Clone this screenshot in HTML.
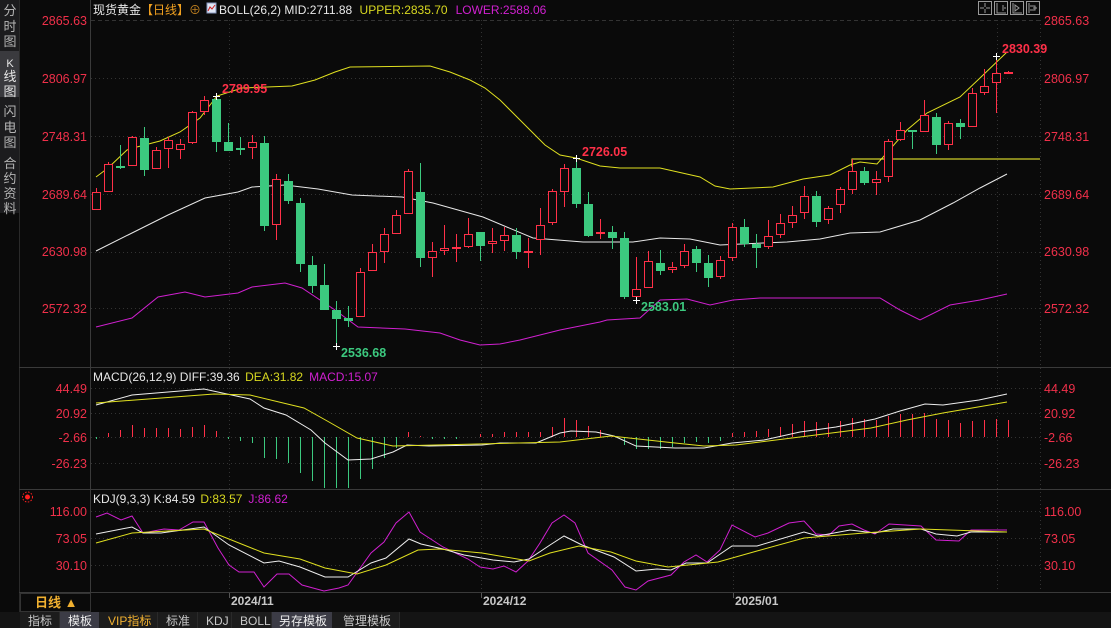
<!DOCTYPE html>
<html><head><meta charset="utf-8"><style>
html,body{margin:0;padding:0;background:#0a0a0a;overflow:hidden}
body{width:1111px;height:628px;position:relative;font-family:"Liberation Sans","Noto Sans CJK SC",sans-serif}
svg{position:absolute;left:0;top:0}
text{font-family:"Liberation Sans","Noto Sans CJK SC",sans-serif}
</style></head><body>
<svg id="s" width="1111" height="628" viewBox="0 0 1111 628" xmlns="http://www.w3.org/2000/svg">
<rect width="1111" height="628" fill="#0a0a0a"/>
<!-- sidebar -->
<rect x="0" y="0" width="19" height="213" fill="#1c1c1e"/>
<rect x="0" y="51" width="19" height="46" fill="#3a3a3e"/>
<g fill="#b4b4b4" font-size="13" text-anchor="middle">
<text x="10" y="15">分</text><text x="10" y="31">时</text><text x="10" y="46">图</text>
<text x="10" y="67" fill="#e6e6e6" font-size="11">K</text><text x="10" y="81" fill="#e6e6e6">线</text><text x="10" y="96" fill="#e6e6e6">图</text>
<text x="10" y="116">闪</text><text x="10" y="132">电</text><text x="10" y="147">图</text>
<text x="10" y="168">合</text><text x="10" y="183">约</text><text x="10" y="198">资</text><text x="10" y="213">料</text>
</g>
<line x1="19.5" y1="0" x2="19.5" y2="612" stroke="#2a2a2a"/>
<!-- frame lines -->
<g stroke="#3a3a3a" stroke-width="1">
<line x1="90.5" y1="0" x2="90.5" y2="612"/>
<line x1="19" y1="367.5" x2="1111" y2="367.5"/>
<line x1="19" y1="489.5" x2="1111" y2="489.5"/>
<line x1="19" y1="592.5" x2="1111" y2="592.5"/>
</g>
<!-- grid -->
<g stroke="#333" stroke-dasharray="1,3">
<line x1="91" y1="20.5" x2="1040" y2="20.5" stroke-dasharray="4,3"/>
<line x1="91" y1="78.5" x2="1040" y2="78.5"/>
<line x1="91" y1="136.5" x2="1040" y2="136.5"/>
<line x1="91" y1="194.5" x2="1040" y2="194.5"/>
<line x1="91" y1="252.5" x2="1040" y2="252.5"/>
<line x1="91" y1="308.5" x2="1040" y2="308.5"/>
<line x1="91" y1="388.5" x2="1040" y2="388.5"/>
<line x1="91" y1="413.5" x2="1040" y2="413.5"/>
<line x1="91" y1="437.5" x2="1040" y2="437.5"/>
<line x1="91" y1="463.5" x2="1040" y2="463.5"/>
<line x1="91" y1="511.5" x2="1040" y2="511.5"/>
<line x1="91" y1="538.5" x2="1040" y2="538.5"/>
<line x1="91" y1="565.5" x2="1040" y2="565.5"/>
<line x1="229.5" y1="20" x2="229.5" y2="592"/>
<line x1="481.5" y1="20" x2="481.5" y2="592"/>
<line x1="733.5" y1="20" x2="733.5" y2="592"/>
<line x1="997.5" y1="20" x2="997.5" y2="592"/>
<line x1="1040.5" y1="20" x2="1040.5" y2="592"/>
</g>
<!-- axis labels -->
<g fill="#f0304a" font-size="12.5" text-anchor="end">
<text x="87" y="25">2865.63</text><text x="87" y="83">2806.97</text><text x="87" y="141">2748.31</text><text x="87" y="199">2689.64</text><text x="87" y="256">2630.98</text><text x="87" y="313">2572.32</text>
<text x="87" y="393">44.49</text><text x="87" y="418">20.92</text><text x="87" y="442">-2.66</text><text x="87" y="468">-26.23</text>
<text x="87" y="516">116.00</text><text x="87" y="543">73.05</text><text x="87" y="570">30.10</text>
</g>
<g fill="#f0304a" font-size="12.5">
<text x="1044" y="25">2865.63</text><text x="1044" y="83">2806.97</text><text x="1044" y="141">2748.31</text><text x="1044" y="199">2689.64</text><text x="1044" y="256">2630.98</text><text x="1044" y="313">2572.32</text>
<text x="1044" y="393">44.49</text><text x="1044" y="418">20.92</text><text x="1044" y="442">-2.66</text><text x="1044" y="468">-26.23</text>
<text x="1044" y="516">116.00</text><text x="1044" y="543">73.05</text><text x="1044" y="570">30.10</text>
</g>
<!-- headers -->
<text x="93" y="14" font-size="12" fill="#e8e8e8">现货黄金<tspan fill="#f0a020">【日线】</tspan><tspan fill="#c08020">⊕</tspan></text>
<rect x="207" y="3" width="9" height="10" fill="#dfe6f5" stroke="#8898c0"/>
<polyline points="208,11 210,7 212,9 215,5" fill="none" stroke="#d02020" stroke-width="1"/>
<text x="219" y="14" font-size="12" fill="#e8e8e8">BOLL(26,2) MID:2711.88 <tspan fill="#d8d820" dx="4">UPPER:2835.70</tspan><tspan fill="#d020d0" dx="8">LOWER:2588.06</tspan></text>
<text x="93" y="381" font-size="12" fill="#e8e8e8">MACD(26,12,9) DIFF:39.36 <tspan fill="#d8d820" dx="2">DEA:31.82</tspan><tspan fill="#d020d0" dx="6">MACD:15.07</tspan></text>
<text x="93" y="503" font-size="12" fill="#e8e8e8">KDJ(9,3,3) K:84.59 <tspan fill="#d8d820" dx="2">D:83.57</tspan><tspan fill="#d020d0" dx="6">J:86.62</tspan></text>
<circle cx="27.5" cy="497" r="2.5" fill="#ff2020"/><circle cx="27.5" cy="497" r="5" fill="none" stroke="#ff2020" stroke-dasharray="1.5,1.5"/>
<!-- top right icons -->
<g fill="none" stroke="#9a9a9a">
<rect x="978.5" y="1.5" width="13" height="13"/><rect x="994.5" y="1.5" width="13" height="13"/><rect x="1010.5" y="1.5" width="13" height="13"/><rect x="1026.5" y="1.5" width="13" height="13"/>
<path d="M985 3v4M985 9v4M980 8h4M986 8h4"/>
<path d="M997 3v10h9M1003 5v6M1004 8h2"/>
<path d="M1013 3v10h9M1015 5l4 3-4 3z"/>
<path d="M1029 3v10M1030 6h5v4h-5M1033 8h4"/>
</g>
<!-- time axis -->
<g fill="#c8c8c8" font-size="12" font-weight="bold">
<text x="231" y="605">2024/11</text><text x="483" y="605">2024/12</text><text x="735" y="605">2025/01</text>
</g>
<g stroke="#555"><line x1="229.5" y1="593" x2="229.5" y2="598"/><line x1="481.5" y1="593" x2="481.5" y2="598"/><line x1="733.5" y1="593" x2="733.5" y2="598"/></g>
<rect x="20.5" y="593.5" width="70" height="18" fill="none" stroke="#333"/>
<text x="35" y="607" font-size="13" font-weight="bold" fill="#f0b030">日线 ▲</text>
<!-- bottom tabs -->
<rect x="0" y="612" width="1111" height="16" fill="#141414"/>
<rect x="20" y="612" width="380" height="16" fill="#1c1c1c"/>
<rect x="60" y="612" width="39" height="16" fill="#3c3c46"/>
<rect x="272" y="612" width="60" height="16" fill="#3c3c46"/>
<g font-size="12" fill="#c8c8c8">
<text x="28" y="625">指标</text><text x="68" y="625" fill="#eee">模板</text>
<text x="108" y="625" fill="#f0b030" font-family="Liberation Mono,Noto Sans CJK SC,monospace">VIP指标</text>
<text x="166" y="625">标准</text><text x="206" y="625" font-family="Liberation Mono,monospace">KDJ</text><text x="240" y="625" font-family="Liberation Mono,monospace">BOLL</text>
<text x="279" y="625" fill="#eee">另存模板</text><text x="343" y="625">管理模板</text>
</g>
<g stroke="#2a2a2a"><line x1="59.5" y1="612" x2="59.5" y2="628"/><line x1="157.5" y1="612" x2="157.5" y2="628"/><line x1="197.5" y1="612" x2="197.5" y2="628"/><line x1="231.5" y1="612" x2="231.5" y2="628"/><line x1="271.5" y1="612" x2="271.5" y2="628"/><line x1="399.5" y1="612" x2="399.5" y2="628"/></g>
<g id="dyn"></g>
</svg>
<script>
var NS="http://www.w3.org/2000/svg",g=document.getElementById("dyn");
function el(n,a){var e=document.createElementNS(NS,n);for(var k in a)e.setAttribute(k,a[k]);g.appendChild(e);return e;}
function pl(pts,c){el("polyline",{points:pts.map(function(p){return p.join(",")}).join(" "),fill:"none",stroke:c,"stroke-width":1});}
// bands
pl([[96,177],[108,168],[127,150],[133,148],[160,141],[180,132],[200,118],[217,96],[242,88],[292,86],[315,80],[335,72],[350,67],[430,66],[450,72],[470,80],[485,88],[500,100],[515,115],[530,130],[545,145],[560,155],[576,158],[600,166],[620,168],[660,168],[700,177],[715,186],[730,189],[773,187],[803,179],[830,175],[850,165],[860,162],[877,164],[907,130],[927,113],[960,97],[980,78],[1007,52]],"#e0e020");
pl([[96,251],[128,235],[168,215],[205,198],[238,192],[252,187],[285,185],[318,189],[352,195],[402,197],[433,203],[483,217],[533,238],[583,242],[633,242],[660,238],[690,239],[720,245],[763,243],[787,242],[820,239],[850,233],[880,232],[920,220],[953,203],[980,188],[1007,174]],"#e8e8e8");
pl([[96,327],[132,318],[158,297],[185,292],[205,297],[238,293],[252,287],[285,283],[302,288],[335,310],[358,327],[405,329],[440,333],[460,340],[480,345],[500,344],[520,340],[560,330],[600,322],[607,320],[640,318],[660,300],[687,299],[710,305],[733,300],[760,298],[880,298],[900,310],[920,320],[950,305],[980,300],[1007,294]],"#d020d0");
el("polyline",{points:"852,167 852,159 1040,159",fill:"none",stroke:"#ffff30","stroke-width":1});
// candles
var C=[["r",192,210,188,210],["r",164,192,162,192],["g",166,167,145,169],["r",137,166,136,166],["g",138,170,127,176],["r",150,169,147,169],["r",140,149,137,168],["r",144,150,139,159],["r",112,143,111,144],["r",100,112,96,115],["g",99,142,96,152],["g",142,151,123,151],["g",148,149,137,155],["r",142,148,135,159],["g",143,226,136,231],["r",179,225,174,240],["g",181,201,174,204],["g",203,264,198,272],["g",265,286,256,293],["g",285,310,264,310],["g",310,319,301,346],["g",318,321,306,327],["r",272,317,268,317],["r",252,271,244,271],["r",234,252,228,263],["r",215,234,210,234],["r",171,214,169,214],["g",192,258,163,267],["r",251,258,242,277],["r",248,251,225,255],["r",247,248,234,262],["r",234,247,218,248],["g",232,246,232,261],["r",241,244,228,253],["r",235,241,227,251],["g",235,252,228,259],["r",251,252,238,268],["r",225,240,208,255],["r",191,223,189,225],["r",168,192,164,207],["g",168,204,158,208],["g",204,236,192,237],["r",232,233,219,239],["g",232,238,226,249],["g",238,297,232,299],["r",289,297,257,300],["r",261,288,251,288],["g",263,271,250,275],["r",267,270,262,273],["r",251,266,244,268],["g",249,263,246,272],["g",263,278,255,287],["r",260,277,256,279],["r",227,258,223,261],["g",227,244,219,247],["g",244,248,234,268],["r",236,247,220,249],["r",223,235,214,238],["r",215,223,206,228],["r",196,213,186,219],["g",196,222,191,227],["r",208,220,206,224],["r",189,205,187,213],["r",171,190,159,194],["g",171,183,167,185],["r",179,183,171,195],["r",141,177,139,182],["r",130,140,122,141],["g",130,131,130,149],["r",115,132,100,132],["g",117,145,113,154],["r",123,145,121,150],["g",123,127,119,139],["r",93,127,88,127],["r",86,93,69,95],["r",73,83,56,113],["r",72,73,71,73]];
var RED="#ff3048",GRN="#3cc97f";
C.forEach(function(c,i){var x=96+12*i,col=c[0]=="r"?RED:GRN;
 el("line",{x1:x+.5,y1:c[3],x2:x+.5,y2:c[4],stroke:col});
 var h=c[2]-c[1];
 if(h<=1){el("rect",{x:x-4,y:c[1],width:9,height:2,fill:col});}
 else if(c[0]=="r"){el("rect",{x:x-3.5,y:c[1]+.5,width:8,height:h-1,fill:"#0a0a0a",stroke:col});}
 else{el("rect",{x:x-4,y:c[1],width:9,height:h,fill:col});}
});
// markers
function cross(x,y){el("path",{d:"M"+(x-3)+" "+(y+.5)+"h7M"+(x+.5)+" "+(y-3)+"v7",stroke:"#fff"});}
cross(216,96);cross(576,158);cross(996,56);cross(336,346);cross(636,300);
function t(x,y,s,c){var e=el("text",{x:x,y:y,fill:c,"font-size":"12.5","font-weight":"bold"});e.textContent=s;}
t(222,93,"2789.95",RED);t(582,156,"2726.05",RED);t(1002,53,"2830.39",RED);t(341,357,"2536.68",GRN);t(641,311,"2583.01",GRN);
// MACD bars
var M=[439,433,430,425,428,428,428,429,427,425,431,439,441,443,458,459,463,473,481,488,488,488,479,469,458,448,432,436,439,439,439,437,434,434,432,432,432,432,427,418,420,426,430,436,445,449,449,449,447,443,442,443,441,433,432,431,429,427,424,421,422,423,421,418,419,420,416,414,414,413,419,420,423,421,420,419,420];
M.forEach(function(v,i){var x=96+12*i+.5;el("line",{x1:x,y1:437,x2:x,y2:v,stroke:v<437?RED:GRN});});
pl([[96,405],[132,395],[204,389],[250,399],[264,408],[286,415],[311,430],[325,443],[348,460],[371,459],[393,452],[407,445],[429,446],[482,445],[500,443],[536,443],[560,433],[571,431],[596,432],[614,436],[636,446],[675,448],[704,448],[732,443],[764,440],[800,432],[836,427],[875,419],[900,411],[925,404],[943,405],[979,400],[1007,394]],"#eeeeee");
pl([[96,403],[214,394],[250,395],[304,408],[329,422],[357,438],[393,446],[560,442],[611,436],[675,443],[704,446],[736,445],[800,437],[871,428],[907,420],[943,413],[1007,402]],"#e0e020");
// KDJ
pl([[96,517],[107,513],[121,520],[132,516],[143,533],[164,529],[179,530],[193,522],[204,522],[218,548],[229,565],[239,572],[254,572],[264,587],[277,574],[289,574],[302,585],[324,591],[339,588],[348,585],[371,553],[384,542],[396,523],[409,512],[420,532],[443,547],[468,559],[480,567],[493,569],[504,566],[516,572],[528,561],[540,543],[552,523],[564,515],[575,523],[588,553],[612,570],[625,587],[636,590],[648,581],[671,575],[684,562],[696,555],[707,562],[720,550],[732,525],[755,537],[768,533],[789,523],[804,521],[816,534],[829,535],[839,526],[852,524],[864,530],[875,534],[889,524],[921,526],[936,540],[959,541],[971,530],[1007,530]],"#d020d0");
pl([[96,534],[132,527],[143,533],[161,533],[204,527],[229,545],[264,563],[279,561],[300,567],[325,577],[348,577],[371,563],[386,558],[409,539],[421,544],[443,549],[464,555],[493,560],[514,562],[529,559],[550,545],[564,536],[582,545],[614,557],[636,571],[657,569],[671,570],[686,563],[707,563],[732,546],[757,546],[804,532],[818,536],[850,530],[875,533],[893,529],[921,529],[936,534],[957,536],[971,532],[1007,532]],"#eeeeee");
pl([[96,543],[132,533],[204,529],[264,553],[300,559],[325,568],[357,574],[386,565],[418,550],[439,549],[482,553],[529,561],[550,553],[579,546],[611,552],[636,561],[668,567],[718,562],[757,551],[804,538],[864,533],[921,529],[1007,532]],"#e0e020");
</script>
</body></html>
